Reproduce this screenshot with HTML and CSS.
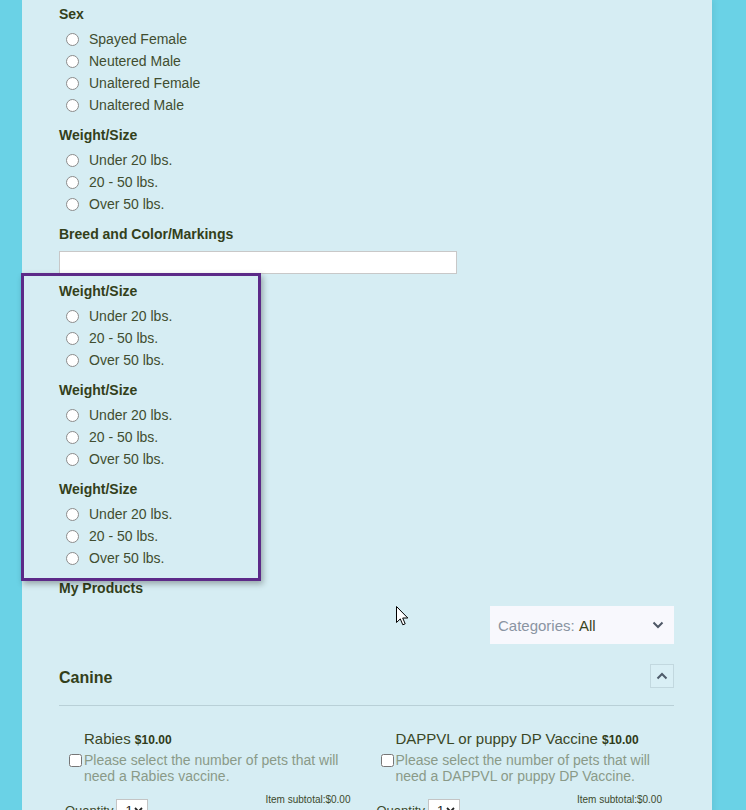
FILE: index.html
```html
<!DOCTYPE html>
<html lang="en">
<head>
<meta charset="utf-8">
<title>Pet Form</title>
<link rel="stylesheet" href="styles.css">
</head>
<body>
<div class="panel">
  <div class="field">
    <div class="field-label">Sex</div>
    <label class="option"><input type="radio" name="sex"><span>Spayed Female</span></label>
    <label class="option"><input type="radio" name="sex"><span>Neutered Male</span></label>
    <label class="option"><input type="radio" name="sex"><span>Unaltered Female</span></label>
    <label class="option"><input type="radio" name="sex"><span>Unaltered Male</span></label>
  </div>
  <div class="field">
    <div class="field-label">Weight/Size</div>
    <label class="option"><input type="radio" name="w0"><span>Under 20 lbs.</span></label>
    <label class="option"><input type="radio" name="w0"><span>20 - 50 lbs.</span></label>
    <label class="option"><input type="radio" name="w0"><span>Over 50 lbs.</span></label>
  </div>
  <div class="field field-text">
    <div class="field-label">Breed and Color/Markings</div>
    <input class="text-input" type="text">
  </div>

  <div class="selected-group">
    <div class="field">
      <div class="field-label">Weight/Size</div>
      <label class="option"><input type="radio" name="w1"><span>Under 20 lbs.</span></label>
      <label class="option"><input type="radio" name="w1"><span>20 - 50 lbs.</span></label>
      <label class="option"><input type="radio" name="w1"><span>Over 50 lbs.</span></label>
    </div>
    <div class="field">
      <div class="field-label">Weight/Size</div>
      <label class="option"><input type="radio" name="w2"><span>Under 20 lbs.</span></label>
      <label class="option"><input type="radio" name="w2"><span>20 - 50 lbs.</span></label>
      <label class="option"><input type="radio" name="w2"><span>Over 50 lbs.</span></label>
    </div>
    <div class="field field-last">
      <div class="field-label">Weight/Size</div>
      <label class="option"><input type="radio" name="w3"><span>Under 20 lbs.</span></label>
      <label class="option"><input type="radio" name="w3"><span>20 - 50 lbs.</span></label>
      <label class="option"><input type="radio" name="w3"><span>Over 50 lbs.</span></label>
    </div>
  </div>

  <div class="products">
    <div class="field-label">My Products</div>
    <div class="toolbar">
      <div class="categories">
        <span class="cat-label">Categories:</span>&nbsp;<span class="cat-value">All</span>
        <svg class="cat-chevron" width="12" height="8" viewBox="0 0 12 8"><path d="M1.5 1.5 L6 6 L10.5 1.5" fill="none" stroke="#4f5866" stroke-width="2"/></svg>
      </div>
    </div>
    <div class="category-head">
      <span class="category-title">Canine</span>
      <span class="collapse-btn"><svg width="12" height="8" viewBox="0 0 12 8"><path d="M1.5 6.5 L6 2 L10.5 6.5" fill="none" stroke="#4f5c6b" stroke-width="2"/></svg></span>
    </div>
    <div class="divider"></div>
    <div class="product-grid">
      <div class="product">
        <div class="product-main">
          <div class="product-title">Rabies <b class="price">$10.00</b></div>
          <input class="product-check" type="checkbox">
          <div class="product-desc">Please select the number of pets that will need a Rabies vaccine.</div>
        </div>
        <div class="product-foot">
          <div class="qty"><span class="qty-label">Quantity</span><span class="qty-select">1<svg width="9" height="6" viewBox="0 0 9 6"><path d="M1 1 L4.5 4.5 L8 1" fill="none" stroke="#222" stroke-width="1.8"/></svg></span></div>
          <div class="subtotal">Item subtotal:$0.00</div>
        </div>
      </div>
      <div class="product">
        <div class="product-main">
          <div class="product-title">DAPPVL or puppy DP Vaccine <b class="price">$10.00</b></div>
          <input class="product-check" type="checkbox">
          <div class="product-desc">Please select the number of pets that will need a DAPPVL or puppy DP Vaccine.</div>
        </div>
        <div class="product-foot">
          <div class="qty"><span class="qty-label">Quantity</span><span class="qty-select">1<svg width="9" height="6" viewBox="0 0 9 6"><path d="M1 1 L4.5 4.5 L8 1" fill="none" stroke="#222" stroke-width="1.8"/></svg></span></div>
          <div class="subtotal">Item subtotal:$0.00</div>
        </div>
      </div>
    </div>
  </div>
</div>
<svg class="cursor" width="13" height="21" viewBox="0 0 13 21"><path d="M0.5 0.5 L0.5 16.5 L4.3 12.9 L6.8 18.8 L9.2 17.8 L6.7 12 L11.8 12 Z" fill="#fff" stroke="#000" stroke-width="1" stroke-linejoin="round"/></svg>
</body>
</html>
```
FILE: styles.css
```css
html, body {
  margin: 0;
  padding: 0;
  height: 810px;
  overflow: hidden;
}
body {
  background: #6ad2e6;
  font-family: "Liberation Sans", Arial, sans-serif;
  color: #3c4a2c;
  position: relative;
}
.panel {
  margin-left: 22px;
  width: 690px;
  min-height: 810px;
  box-sizing: border-box;
  background: #d6edf3;
  padding: 6px 38px 0 37px;
  box-shadow: 3px 0 5px rgba(0, 0, 0, 0.05);
}
.field {
  margin-bottom: 11px;
}
.field-last {
  margin-bottom: 0;
}
.field-label {
  font-size: 14px;
  font-weight: bold;
  line-height: 16px;
  color: #33401a;
  margin-bottom: 6px;
}
.field-text .field-label {
  margin-bottom: 9px;
}
.option {
  display: flex;
  align-items: center;
  height: 22px;
  font-size: 14px;
  color: #414d30;
}
.option input {
  appearance: none;
  -webkit-appearance: none;
  width: 13px;
  height: 13px;
  margin: 0 10px 0 7px;
  border: 1px solid #8c8c8c;
  border-radius: 50%;
  background: #fff;
  box-sizing: border-box;
}
.text-input {
  display: block;
  width: 398px;
  height: 23px;
  box-sizing: border-box;
  border: 1px solid #c8c8c8;
  background: #fff;
  margin: 0;
  padding: 0 4px;
}
.field-text {
  margin-bottom: 9px;
}
.selected-group {
  position: relative;
  margin-bottom: 11px;
}
.selected-group::before {
  content: "";
  position: absolute;
  left: -38px;
  top: -10px;
  width: 240px;
  bottom: -12px;
  box-sizing: border-box;
  border: 3px solid #5c2a88;
  box-shadow: 2px 3px 6px rgba(0, 0, 0, 0.3);
  pointer-events: none;
}
.products .field-label {
  margin-bottom: 0;
}
.toolbar {
  display: flex;
  justify-content: flex-end;
  margin-top: 10px;
}
.categories {
  width: 184px;
  height: 38px;
  box-sizing: border-box;
  background: #f8f8fd;
  display: flex;
  align-items: center;
  padding: 0 10px 0 8px;
  font-size: 15px;
}
.cat-label {
  color: #8a94a2;
}
.cat-value {
  color: #39461f;
}
.cat-chevron {
  margin-left: auto;
}
.category-head {
  display: flex;
  justify-content: space-between;
  align-items: center;
  height: 24px;
  margin-top: 20px;
  margin-bottom: 17px;
}
.category-title {
  font-size: 16px;
  font-weight: bold;
  color: #33401a;
  padding-top: 4px;
}
.collapse-btn {
  width: 24px;
  height: 24px;
  box-sizing: border-box;
  border: 1px solid #c2d8df;
  background: #d9eff5;
  display: flex;
  align-items: center;
  justify-content: center;
}
.divider {
  height: 1px;
  background: #b9d0d7;
  margin-bottom: 24px;
}
.product-grid {
  display: grid;
  grid-template-columns: 1fr 1fr;
  column-gap: 8px;
}
.product-main {
  display: grid;
  grid-template-columns: 13px 1fr;
  column-gap: 2px;
  padding-left: 10px;
}
.product-title {
  grid-column: 2;
  font-size: 15px;
  line-height: 18px;
  color: #3a4726;
  margin-bottom: 3px;
}
.price {
  font-size: 12px;
  color: #2f3b18;
}
.product-check {
  grid-column: 1;
  width: 13px;
  height: 13px;
  margin: 2px 0 0 0;
}
.product-desc {
  grid-column: 2;
  font-size: 14px;
  line-height: 16px;
  color: #8a9a88;
  padding-right: 12px;
}
.product-foot {
  display: flex;
  justify-content: space-between;
  align-items: flex-start;
  margin-top: 10px;
  padding: 0 12px 0 6px;
}
.qty {
  display: flex;
  align-items: center;
  padding-top: 5px;
}
.qty-label {
  font-size: 13px;
  color: #3c4a2c;
  margin-right: 3px;
}
.qty-select {
  width: 32px;
  height: 22px;
  box-sizing: border-box;
  border: 1px solid #c4c4c4;
  background: #fff;
  display: flex;
  align-items: center;
  justify-content: space-between;
  padding: 0 4px 0 8px;
  font-size: 13px;
  color: #222;
}
.subtotal {
  font-size: 10px;
  line-height: 12px;
  color: #3c4a2c;
}
.cursor {
  position: absolute;
  left: 396px;
  top: 606px;
}
```
